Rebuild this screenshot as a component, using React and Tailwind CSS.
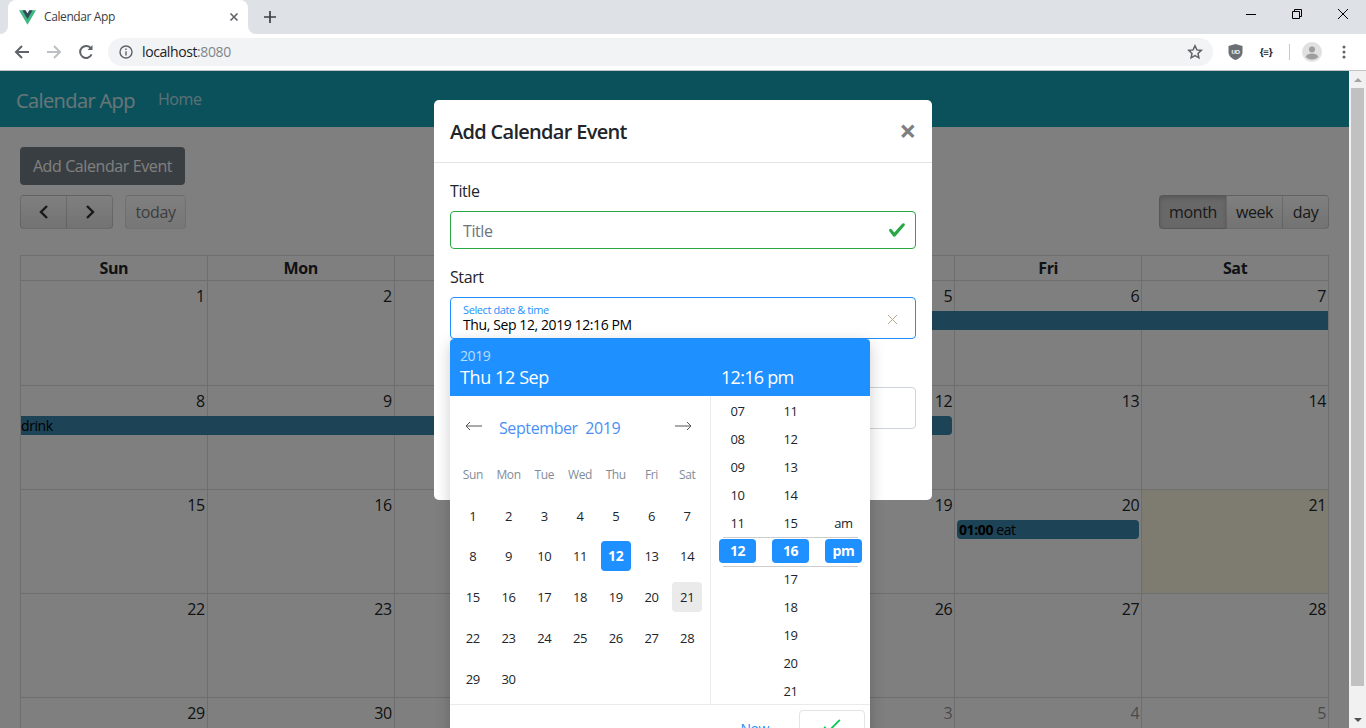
import React from "react";

const weekdays = ["Sun", "Mon", "Tue", "Wed", "Thu", "Fri", "Sat"];

const weeks = [
  [1, 2, 3, 4, 5, 6, 7],
  [8, 9, 10, 11, 12, 13, 14],
  [15, 16, 17, 18, 19, 20, 21],
  [22, 23, 24, 25, 26, 27, 28],
  [29, 30, 1, 2, 3, 4, 5],
];

const pickerWeeks = [
  [1, 2, 3, 4, 5, 6, 7],
  [8, 9, 10, 11, 12, 13, 14],
  [15, 16, 17, 18, 19, 20, 21],
  [22, 23, 24, 25, 26, 27, 28],
  [29, 30],
];

const hours = ["07", "08", "09", "10", "11", "12"];
const minutes = ["11", "12", "13", "14", "15", "16", "17", "18", "19", "20", "21"];

const ChromeBar = () => (
  <div className="h-[71px] shrink-0 flex flex-col text-[#3c4043]">
    <div className="h-[34px] bg-[#dee1e6] flex items-stretch">
      <div className="relative ml-2 w-[240px] bg-white rounded-t-lg flex items-center pl-[11px] pr-[9px]">
        <svg className="absolute -left-2 bottom-0" width="8" height="8" viewBox="0 0 8 8">
          <path d="M8 0v8H0a8 8 0 0 0 8-8z" fill="#fff" />
        </svg>
        <svg className="absolute -right-2 bottom-0" width="8" height="8" viewBox="0 0 8 8">
          <path d="M0 0v8h8a8 8 0 0 1-8-8z" fill="#fff" />
        </svg>
        <svg width="17" height="15" viewBox="0 0 261.76 226.69">
          <path d="M161.096.001l-30.225 52.351L100.647.001H-.005l130.877 226.688L261.749.001z" fill="#41b883" />
          <path d="M161.096.001l-30.225 52.351L100.647.001H52.346l78.526 136.01L209.398.001z" fill="#35495e" />
        </svg>
        <span className="ml-2 text-xs">Calendar App</span>
        <svg className="ml-auto" width="10" height="10" viewBox="0 0 10 10" stroke="#5f6368" strokeWidth="1.6">
          <path d="M1.5 1.5l7 7M8.5 1.5l-7 7" />
        </svg>
      </div>
      <div className="ml-4 flex items-center">
        <svg width="12" height="12" viewBox="0 0 12 12" stroke="#3c4043" strokeWidth="1.7">
          <path d="M6 0v12M0 6h12" />
        </svg>
      </div>
      <div className="ml-auto flex items-start">
        <div className="w-[46px] h-7 flex items-center justify-center">
          <div className="w-[10px] h-px bg-black" />
        </div>
        <div className="w-[46px] h-7 flex items-center justify-center">
          <svg width="10" height="10" viewBox="0 0 10 10" fill="none" stroke="#000">
            <path d="M.5 2.5h7v7h-7zM2.5 2.5v-2h7v7h-2" />
          </svg>
        </div>
        <div className="w-[46px] h-7 flex items-center justify-center">
          <svg width="10" height="10" viewBox="0 0 10 10" stroke="#000">
            <path d="M0 0l10 10M10 0L0 10" />
          </svg>
        </div>
      </div>
    </div>
    <div className="h-[37px] bg-white border-b border-[#c4c4c4] flex items-center pl-[14px]">
      <svg width="16" height="16" viewBox="0 0 16 16" fill="none" stroke="#5f6368" strokeWidth="2">
        <path d="M15 8H2M8 2L2 8l6 6" />
      </svg>
      <svg className="ml-4" width="16" height="16" viewBox="0 0 16 16" fill="none" stroke="#bcbfc3" strokeWidth="2">
        <path d="M1 8h13M8 2l6 6-6 6" />
      </svg>
      <svg className="ml-4" width="16" height="16" viewBox="0 0 16 16" fill="none" stroke="#5f6368" strokeWidth="2">
        <path d="M13.6 10.4A6 6 0 1 1 13 4.4" />
        <path d="M14.5 1v5h-5z" fill="#5f6368" stroke="none" />
      </svg>
      <div className="ml-[14px] w-[1105px] h-7 rounded-full bg-[#f1f3f4] flex items-center pl-[11px] pr-[10px]">
        <svg width="14" height="14" viewBox="0 0 14 14" fill="none" stroke="#5f6368" strokeWidth="1.4">
          <circle cx="7" cy="7" r="6" />
          <path d="M7 6.2V10.4M7 3.6v1.5" />
        </svg>
        <span className="ml-[9px] text-sm text-[#202124]">
          localhost<span className="text-[#80868b]">:8080</span>
        </span>
        <svg className="ml-auto" width="16" height="16" viewBox="0 0 16 16" fill="none" stroke="#5f6368" strokeWidth="1.5">
          <path d="M8 1.8l1.9 4.1 4.4.5-3.3 3 .9 4.4L8 11.6l-3.9 2.2.9-4.4-3.3-3 4.4-.5z" />
        </svg>
      </div>
      <svg className="ml-[15px]" width="15" height="16" viewBox="0 0 15 16">
        <path d="M7.5 0l7 2v6c0 4-3 6.5-7 8-4-1.500-7-4-7-8V2z" fill="#6b6f73" />
        <text x="7.500" y="9.500" fontSize="6" fontWeight="700" fill="#fff" textAnchor="middle" fontFamily="Liberation Sans, sans-serif">UO</text>
      </svg>
      <span className="ml-[12px] w-[22px] text-center text-[10px] font-bold text-[#202124]">{"{≡}"}</span>
      <div className="ml-[12px] w-px h-4 bg-[#c8cacc]" />
      <div className="ml-3 w-5 h-5 rounded-full bg-[#e0e0e0] overflow-hidden relative shrink-0">
        <svg width="20" height="20" viewBox="0 0 20 20" fill="#9e9e9e">
          <circle cx="10" cy="7.500" r="3" />
          <ellipse cx="10" cy="14.500" rx="6" ry="3" />
        </svg>
      </div>
      <svg className="ml-[20px]" width="4" height="14" viewBox="0 0 4 14" fill="#5f6368">
        <circle cx="2" cy="2" r="1.500" />
        <circle cx="2" cy="7" r="1.500" />
        <circle cx="2" cy="12" r="1.500" />
      </svg>
    </div>
  </div>
);

const ToolButton = ({ className, children }) => (
  <button className={"h-[34px] px-[9px] text-[#333] text-[16px] border border-[#00000026] bg-gradient-to-b from-white to-[#e6e6e6] flex items-center justify-center " + className}>
    {children}
  </button>
);

const Calendar = () => (
  <div>
    <div className="flex justify-between items-center mt-[10px] mb-[26px]">
      <div className="flex items-center">
        <ToolButton className="w-[47px] rounded-l">
          <svg width="12" height="14" viewBox="0 0 12 14" fill="none" stroke="#333" strokeWidth="2.4">
            <path d="M9 1L3 7l6 6" />
          </svg>
        </ToolButton>
        <ToolButton className="w-[47px] -ml-px rounded-r">
          <svg width="12" height="14" viewBox="0 0 12 14" fill="none" stroke="#333" strokeWidth="2.4">
            <path d="M3 1l6 6-6 6" />
          </svg>
        </ToolButton>
        <ToolButton className="ml-3 w-[61px] rounded opacity-65">today</ToolButton>
      </div>
      <div className="flex">
        <ToolButton className="w-[68px] rounded-l !bg-none bg-[#d0d0d0] shadow-[inset_0_2px_4px_rgba(0,0,0,0.15)]">month</ToolButton>
        <ToolButton className="w-[57px] -ml-px">week</ToolButton>
        <ToolButton className="w-[47px] -ml-px rounded-r">day</ToolButton>
      </div>
    </div>
    <div className="border-r border-[#ddd] text-[#212529]">
      <div className="grid grid-cols-7 border-t border-b border-[#ddd] h-[26px]">
        {weekdays.map((d) => (
          <div key={d} className="border-l border-[#ddd] text-center font-bold leading-[25px]">
            {d}
          </div>
        ))}
      </div>
      {weeks.map((week, w) => (
        <div key={w} className={"relative grid grid-cols-7 border-b border-[#ddd] " + (w === 0 ? "h-[105px]" : "h-[104px]")}>
          {week.map((day, i) => (
            <div
              key={i}
              className={
                "border-l border-[#ddd] text-right pr-[2px] pt-[3px] leading-6 " +
                (w === 2 && i === 6 ? "bg-[#fcf8e3] " : "") +
                (w === 4 && i > 1 ? "text-[#21252980]" : "")
              }
            >
              {day}
            </div>
          ))}
          {w === 0 && (
            <div className="absolute left-[50%] right-0 top-[30px] h-[19px] bg-[#3a87ad]" />
          )}
          {w === 1 && (
            <div className="absolute left-px right-[376px] top-[30px] h-[19px] bg-[#3a87ad] rounded-r text-sm leading-[19px] text-black">
              drink
            </div>
          )}
          {w === 2 && (
            <div className="absolute left-[937px] w-[182px] top-[30px] h-[19px] bg-[#3a87ad] rounded text-sm leading-[19px] text-black pl-[2px]">
              <b>01:00</b> eat
            </div>
          )}
        </div>
      ))}
    </div>
  </div>
);

const Pill = ({ children }) => (
  <span className="relative z-10 w-[37px] h-6 rounded bg-[#1e90ff] text-white font-bold text-sm flex items-center justify-center">
    {children}
  </span>
);

const TimeCell = ({ children }) => (
  <div className="h-7 pt-[2px] flex items-center justify-center">{children}</div>
);

const Picker = () => (
  <div className="absolute left-0 top-full w-[420px] bg-white rounded shadow-[0_4px_16px_rgba(0,0,0,0.2)] z-10">
    <div className="h-[57px] bg-[#1e90ff] rounded-t text-white pl-[10px] pt-[7px]">
      <div className="text-sm leading-5 text-white/70">2019</div>
      <div className="flex text-lg leading-[24px] -mt-px">
        <span className="w-[261px]">Thu 12 Sep</span>
        <span className="tracking-[-0.04em]">12:16 pm</span>
      </div>
    </div>
    <div className="flex h-[309px] border-b border-[#eaeaea]">
      <div className="w-[261px] border-r border-[#eaeaea] px-[5px]">
        <div className="h-[60px] flex items-center pl-[10px] pr-[13px] text-[#4b90f5]">
          <svg width="18" height="10" viewBox="0 0 18 10" fill="none" stroke="#555">
            <path d="M17 5H1M5 1L1 5l4 4" />
          </svg>
          <span className="ml-4 mt-[4px] text-base whitespace-pre">September  2019</span>
          <svg className="ml-auto" width="18" height="10" viewBox="0 0 18 10" fill="none" stroke="#555">
            <path d="M1 5h16M13 1l4 4-4 4" />
          </svg>
        </div>
        <div className="grid grid-cols-7 h-[39px] pb-[2px] items-center text-center text-xs text-[#7f8c98]">
          {weekdays.map((d) => (
            <div key={d}>{d}</div>
          ))}
        </div>
        {pickerWeeks.map((week, w) => (
          <div key={w} className="grid grid-cols-7 h-[40.8px] items-center justify-items-center text-[13px] text-[#212529]">
            {week.map((day) => (
              <div
                key={day}
                className={
                  "w-[30px] h-[30px] rounded flex items-center justify-center " +
                  (day === 12 ? "bg-[#1e90ff] text-white font-bold text-sm " : "pt-[2px] ") +
                  (day === 21 ? "bg-[#eaeaea]" : "")
                }
              >
                {day}
              </div>
            ))}
          </div>
        ))}
      </div>
      <div className="relative flex w-[159px] text-[13px] text-[#212529] text-center pt-px">
        <div className="w-[53px]">
          {hours.map((h) =>
            h === "12" ? (
              <div key={h} className="h-7 flex items-center justify-center">
                <Pill>{h}</Pill>
              </div>
            ) : (
              <TimeCell key={h}>{h}</TimeCell>
            )
          )}
        </div>
        <div className="w-[53px]">
          {minutes.map((m) =>
            m === "16" ? (
              <div key={m} className="h-7 flex items-center justify-center">
                <Pill>{m}</Pill>
              </div>
            ) : (
              <TimeCell key={m}>{m}</TimeCell>
            )
          )}
        </div>
        <div className="w-[53px] pt-[112px]">
          <TimeCell>am</TimeCell>
          <div className="h-7 flex items-center justify-center">
            <Pill>pm</Pill>
          </div>
        </div>
        <div className="absolute left-[12px] w-[135px] top-[141px] h-[30px] border-y border-[#cccccc] pointer-events-none" />
      </div>
    </div>
    <div className="h-[60px] flex items-start justify-end pr-[5px] pt-[5px]">
      <span className="mr-[30px] mt-[9px] text-sm text-[#1e90ff]">Now</span>
      <div className="w-[66px] h-10 border border-[#e4e4e4] rounded flex items-start justify-center pt-[8px]">
        <svg width="18" height="14" viewBox="0 0 20 16" fill="none" stroke="#00c853" strokeWidth="2">
          <path d="M1 9l5 5L19 1" />
        </svg>
      </div>
    </div>
  </div>
);

const Modal = () => (
  <div className="absolute left-[434px] top-[29px] w-[498px] bg-white rounded-[5px] text-[#212529]">
    <div className="h-[63px] px-4 border-b border-[#e2e4e6] flex items-center justify-between">
      <h5 className="text-xl font-semibold tracking-[-0.035em] pt-px">Add Calendar Event</h5>
      <span className="text-[30px] font-bold text-[#7f7f7f] leading-none">×</span>
    </div>
    <div className="px-4 pt-4 pb-[71px]">
      <label className="block leading-6 mb-2">Title</label>
      <div className="relative mb-4">
        <input
          placeholder="Title"
          className="w-full h-[38px] px-3 pt-px border border-[#28a745] rounded placeholder:text-[#6c757d] outline-none"
        />
        <svg className="absolute right-[10px] top-[10px]" width="18" height="18" viewBox="0 0 8 8">
          <path fill="#28a745" d="M2.3 6.73L.6 4.53c-.4-1.04.46-1.4 1.1-.8l1.1 1.4 3.4-3.8c.6-.63 1.6-.27 1.2.7l-4 4.6c-.43.5-.8.4-1.1.1z" />
        </svg>
      </div>
      <label className="block leading-6 mb-2">Start</label>
      <div className="relative mb-4">
        <div className="h-[42px] border border-[#1e90ff] rounded pl-3 pt-[5px]">
          <div className="text-[11px] leading-[14px] text-[#1e90ff]">Select date &amp; time</div>
          <div className="text-[14px] leading-[16px] text-black">Thu, Sep 12, 2019 12:16 PM</div>
        </div>
        <svg className="absolute right-[18px] top-[17px]" width="11" height="11" viewBox="0 0 11 11" stroke="#b8a88a">
          <path d="M1 1l9 9M10 1l-9 9" />
        </svg>
        <Picker />
      </div>
      <div className="h-6 mb-2" />
      <div className="h-[42px] border border-[#ced4da] rounded" />
    </div>
  </div>
);

const Scrollbar = () => (
  <div className="w-[17px] shrink-0 bg-[#f1f1f1] flex flex-col items-center">
    <div className="h-[17px] flex items-center justify-center">
      <div className="w-0 h-0 border-x-[4px] border-x-transparent border-b-[4px] border-b-[#a3a3a3]" />
    </div>
    <div className="w-[13px] h-[598px] bg-[#c1c1c1]" />
    <div className="mt-auto h-[17px] flex items-center justify-center">
      <div className="w-0 h-0 border-x-[4px] border-x-transparent border-t-[4px] border-t-[#505050]" />
    </div>
  </div>
);

const App = () => {
  return (
    <div className="h-[728px] overflow-hidden flex flex-col font-['Open_Sans',sans-serif] tracking-[-0.025em]">
      <ChromeBar />
      <div className="flex-1 flex min-h-0">
        <div className="relative flex-1 min-w-0 bg-white overflow-hidden">
          <div className="h-14 bg-[#17a2b8] flex items-center pl-4">
            <span className="text-xl text-white/80 pt-[3px] tracking-[-0.03em]">Calendar App</span>
            <span className="ml-[23px] text-white/70">Home</span>
          </div>
          <div className="px-5 pt-5">
            <button className="h-[38px] w-[165px] rounded bg-[#727c85] text-white">Add Calendar Event</button>
            <Calendar />
          </div>
          <div className="absolute inset-0 bg-black/50" />
          <Modal />
        </div>
        <Scrollbar />
      </div>
    </div>
  );
};

export default App;
